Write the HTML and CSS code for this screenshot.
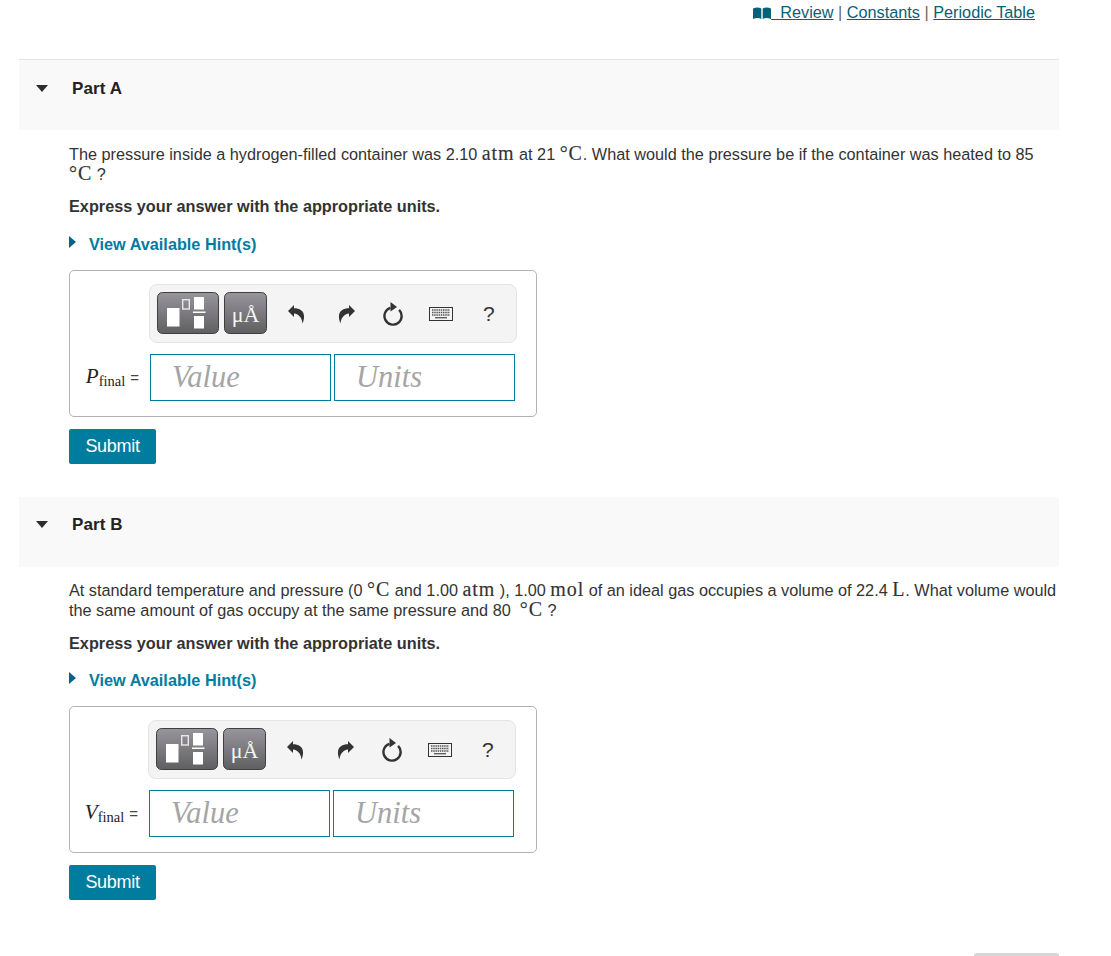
FILE: index.html
```html
<!DOCTYPE html>
<html lang="en">
<head>
<meta charset="utf-8">
<title>Gas Laws</title>
<link rel="stylesheet" href="styles.css">
</head>
<body>
<svg class="defs" width="0" height="0" aria-hidden="true">
  <defs>
    <linearGradient id="btn" x1="0" y1="0" x2="0" y2="1">
      <stop offset="0" stop-color="#98969d"/>
      <stop offset="1" stop-color="#5f5e60"/>
    </linearGradient>
  </defs>
</svg>
<div class="page">
  <nav class="toplinks">
    <svg class="book" width="18" height="12" viewBox="0 0 18 12"><path d="M0 1.5 C3 .2 6 .2 8.3 1.5V12C6 10.8 3 10.8 0 12Z M9.7 1.5C12 .2 15 .2 18 1.5V12C15 10.8 12 10.8 9.7 12Z" fill="#0a6078"/></svg>
    <a class="toplink" href="#">&nbsp;&nbsp;Review</a> <span class="sep">|</span> <a class="toplink" href="#">Constants</a> <span class="sep">|</span> <a class="toplink" href="#">Periodic Table</a>
  </nav>

  <section class="part part-a">
    <header class="part-head"><span class="caret"></span><h2 class="part-title">Part A</h2></header>
    <div class="part-body">
      <p class="question">The pressure inside a hydrogen-filled container was 2.10 <span class="m">atm</span> at 21 <span class="m">&#176;C</span>. What would the pressure be if the container was heated to 85 <span class="m">&#176;C</span> ?</p>
      <p class="instr">Express your answer with the appropriate units.</p>
      <a class="hint" href="#"><span class="hint-caret"></span>View Available Hint(s)</a>
      <div class="answer">
        <div class="toolbar">
          <button class="tool tool-tpl" aria-label="Templates"><svg width="62" height="42" viewBox="0 0 62 42"><rect class="tool-bg" x=".5" y=".5" width="61" height="41" rx="5"/><rect x="10" y="16" width="12.500" height="18.500" fill="#fff"/><rect x="25.700" y="7.700" width="6.600" height="9.300" fill="none" stroke="#e8e8e8" stroke-width="1.400"/><rect x="37" y="5" width="10" height="12.500" fill="#fff"/><rect x="36" y="19.500" width="12.500" height="1.500" fill="#fff"/><rect x="37" y="24" width="10" height="12.500" fill="#fff"/></svg></button>
          <button class="tool tool-unit" aria-label="Units"><svg width="43" height="42" viewBox="0 0 43 42"><rect class="tool-bg" x=".5" y=".5" width="42" height="41" rx="5"/></svg><span class="unit-label">&#956;&#197;</span></button>
          <svg class="ico ico-undo" width="18" height="20" viewBox="0 0 18 20"><path d="M0 7 6 1V4.300C13 4.300 19 8.500 14.500 19.500 14 14 11 10 6 9.500V13Z" fill="#333"/></svg>
          <svg class="ico ico-redo" width="18" height="20" viewBox="0 0 18 20"><path d="M18 7 12 1V4.300C5 4.300-1 8.500 3.500 19.500 4 14 7 10 12 9.500V13Z" fill="#333"/></svg>
          <svg class="ico ico-reset" width="22" height="24" viewBox="0 0 22 24"><path d="M17.100 7.900A8.600 8.600 0 1 1 8.500 5.800" fill="none" stroke="#333" stroke-width="2.400"/><path d="M8.500 0 15 5 8.500 9.500Z" fill="#333"/></svg>
          <svg class="ico ico-kbd" width="24" height="14" viewBox="0 0 24 14"><rect x=".5" y=".5" width="23" height="13" fill="#f4f4f4" stroke="#333"/><path d="M3 3H21M3 5.500H21M3 8H21" stroke="#555" stroke-width="1.500" stroke-dasharray="1.500 .7"/><path d="M6 10.700H18" stroke="#555" stroke-width="1.300"/></svg>
          <span class="help">?</span>
        </div>
        <div class="fields">
          <div class="var"><span class="var-i">P</span><span class="var-sub">final</span><span class="eq">=</span></div>
          <input class="field" placeholder="Value" aria-label="Value">
          <input class="field" placeholder="Units" aria-label="Units">
        </div>
      </div>
      <button class="submit">Submit</button>
    </div>
  </section>

  <section class="part part-b">
    <header class="part-head"><span class="caret"></span><h2 class="part-title">Part B</h2></header>
    <div class="part-body">
      <p class="question">At standard temperature and pressure (0 <span class="m">&#176;C</span> and 1.00 <span class="m">atm</span> ), 1.00 <span class="m">mol</span> of an ideal gas occupies a volume of 22.4 <span class="m">L</span>. What volume would the same amount of gas occupy at the same pressure and 80 &nbsp;<span class="m">&#176;C</span> ?</p>
      <p class="instr">Express your answer with the appropriate units.</p>
      <a class="hint" href="#"><span class="hint-caret"></span>View Available Hint(s)</a>
      <div class="answer answer-b">
        <div class="toolbar">
          <button class="tool tool-tpl" aria-label="Templates"><svg width="62" height="42" viewBox="0 0 62 42"><rect class="tool-bg" x=".5" y=".5" width="61" height="41" rx="5"/><rect x="10" y="16" width="12.500" height="18.500" fill="#fff"/><rect x="25.700" y="7.700" width="6.600" height="9.300" fill="none" stroke="#e8e8e8" stroke-width="1.400"/><rect x="37" y="5" width="10" height="12.500" fill="#fff"/><rect x="36" y="19.500" width="12.500" height="1.500" fill="#fff"/><rect x="37" y="24" width="10" height="12.500" fill="#fff"/></svg></button>
          <button class="tool tool-unit" aria-label="Units"><svg width="43" height="42" viewBox="0 0 43 42"><rect class="tool-bg" x=".5" y=".5" width="42" height="41" rx="5"/></svg><span class="unit-label">&#956;&#197;</span></button>
          <svg class="ico ico-undo" width="18" height="20" viewBox="0 0 18 20"><path d="M0 7 6 1V4.300C13 4.300 19 8.500 14.500 19.500 14 14 11 10 6 9.500V13Z" fill="#333"/></svg>
          <svg class="ico ico-redo" width="18" height="20" viewBox="0 0 18 20"><path d="M18 7 12 1V4.300C5 4.300-1 8.500 3.500 19.500 4 14 7 10 12 9.500V13Z" fill="#333"/></svg>
          <svg class="ico ico-reset" width="22" height="24" viewBox="0 0 22 24"><path d="M17.100 7.900A8.600 8.600 0 1 1 8.500 5.800" fill="none" stroke="#333" stroke-width="2.400"/><path d="M8.500 0 15 5 8.500 9.500Z" fill="#333"/></svg>
          <svg class="ico ico-kbd" width="24" height="14" viewBox="0 0 24 14"><rect x=".5" y=".5" width="23" height="13" fill="#f4f4f4" stroke="#333"/><path d="M3 3H21M3 5.500H21M3 8H21" stroke="#555" stroke-width="1.500" stroke-dasharray="1.500 .7"/><path d="M6 10.700H18" stroke="#555" stroke-width="1.300"/></svg>
          <span class="help">?</span>
        </div>
        <div class="fields">
          <div class="var"><span class="var-i">V</span><span class="var-sub">final</span><span class="eq">=</span></div>
          <input class="field" placeholder="Value" aria-label="Value">
          <input class="field" placeholder="Units" aria-label="Units">
        </div>
      </div>
      <button class="submit">Submit</button>
    </div>
  </section>
  <div class="footer-stub"></div>
</div>
</body>
</html>
```
FILE: styles.css
```css
* { box-sizing: border-box; }
html, body { margin: 0; padding: 0; height: 956px; overflow: hidden; background: #fff; }
body { font-family: "Liberation Sans", Arial, sans-serif; font-size: 16.25px; color: #333; }
.defs { position: absolute; }
.page { width: 1040px; margin-left: 19px; }

.toplinks { height: 59px; padding: 3px 24px 0 0; text-align: right; line-height: 18px; color: #777; }
.toplink { color: #0a6078; text-decoration: underline; }
.sep { color: #666; }
.book { vertical-align: -1px; margin-right: -4px; }

.part { background: #fff; }
.part-head { display: flex; align-items: flex-start; height: 71px; background: #f9f9f9; border-top: 1px solid #e3e3e3; padding: 20px 0 0 17px; }
.part-b .part-head { height: 70px; border-top: 0; padding-top: 19px; }
.caret { width: 0; height: 0; margin-top: 5px; border-left: 6.5px solid transparent; border-right: 6.5px solid transparent; border-top: 7px solid #2d2d2d; }
.part-title { margin: 0 0 0 23px; padding-left: 1px; font-size: 17px; line-height: 18px; font-weight: bold; letter-spacing: .1px; color: #222; }

.part-body { padding: 14px 0 0 50px; }
.part-b .part-body { padding-top: 13px; }
.question { margin: 0; line-height: 20px; }
.m { font-family: "Liberation Serif", serif; font-size: 20px; line-height: 0; letter-spacing: .9px; -webkit-text-stroke: .15px #333; }
.instr { margin: 12px 0 0; font-weight: bold; line-height: 20px; }
.part-b .instr { margin-top: 13px; }
.hint { display: flex; align-items: center; height: 18px; margin-top: 19px; font-weight: bold; line-height: 18px; color: #007c9f; text-decoration: none; }
.part-b .hint { margin-top: 18px; }
.hint-caret { width: 0; height: 0; margin: -4px 13px 0 0; border-top: 6.5px solid transparent; border-bottom: 6.5px solid transparent; border-left: 7px solid #00638a; }

.answer { width: 468px; height: 147px; margin-top: 17px; padding: 13px 0 0 79px; border: 1px solid #b3b3b3; border-radius: 5px; background: #fff; }
.answer-b { padding-left: 78px; }
.toolbar { display: flex; align-items: center; width: 368px; height: 59px; padding-left: 7px; background: #f4f4f4; border: 1px solid #e4e4e4; border-radius: 8px; }
.tool { position: relative; display: block; margin-top: -1px; padding: 0; border: 0; background: none; height: 42px; }
.tool svg { display: block; }
.tool-bg { fill: url(#btn); stroke: #3f3f3f; stroke-width: 1; }
.tool-tpl { width: 62px; margin-right: 5px; }
.tool-unit { width: 43px; margin-right: 21px; }
.unit-label { position: absolute; left: 0; right: 0; top: 10px; text-align: center; font-family: "Liberation Serif", serif; font-size: 22px; line-height: 26px; color: #f4f4f4; }
.ico { display: block; flex: none; }
.ico-redo { margin-left: 31px; }
.ico-reset { margin-left: 27px; }
.ico-kbd { margin-left: 25px; }
.help { margin-left: 30px; font-size: 21px; line-height: 24px; color: #333; }

.fields { position: relative; display: flex; gap: 3px; margin: 11px 0 0 1px; }
.var { position: absolute; right: 100%; top: 0; height: 47px; margin-right: 11px; display: flex; align-items: baseline; white-space: nowrap; padding-top: 12px; font-family: "Liberation Serif", serif; color: #222; }
.var-i { font-size: 21px; font-style: italic; line-height: 20px; }
.var-sub { font-size: 14.5px; position: relative; top: 3px; }
.eq { margin-left: 5px; font-family: "Liberation Sans", sans-serif; font-size: 15px; color: #444; }
.field { width: 181px; height: 47px; padding: 0 0 0 21px; border: 1px solid #007c9f; border-radius: 0; background: #fff; font-family: "Liberation Serif", serif; font-size: 30.5px; font-style: italic; outline: 0; }
.field::placeholder { color: #a5a5a5; opacity: 1; }

.submit { display: block; width: 87px; height: 35px; margin: 12px 0 0; padding: 0; border: 0; border-radius: 2px; background: #007c9f; color: #fff; font-family: "Liberation Sans", sans-serif; font-size: 18px; letter-spacing: -.3px; }
.part-b { margin-top: 33px; }
.footer-stub { position: absolute; left: 974px; top: 953px; width: 85px; height: 3px; background: #d6d6d6; border-radius: 3px 3px 0 0; }
```
